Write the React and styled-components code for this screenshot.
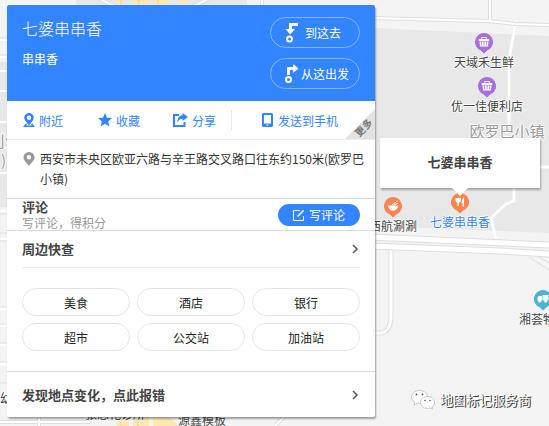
import styled, { createGlobalStyle } from "styled-components";

const GlobalStyle = createGlobalStyle`
  * {
    box-sizing: border-box;
  }

  body {
    margin: 0;
    overflow: hidden;
    font-family: "Noto Sans CJK SC", sans-serif;
    font-size: 12px;
    color: #333;
  }

  button {
    font-family: inherit;
    cursor: pointer;
  }
`;

const Page = styled.main`
  position: relative;
  min-height: 100vh;
  padding: 5px 7px;
  overflow: hidden;
  background-color: #f4f4f4;
`;

const MapLayer = styled.div`
  position: absolute;
  inset: 0;
  overflow: hidden;
`;

const MapDrawing = styled.svg`
  position: absolute;
  top: 0;
  left: 0;
  width: 100%;
  height: 100%;
`;

const Marker = styled.div`
  position: absolute;
  left: ${({ $x }) => $x}px;
  top: ${({ $y }) => $y}px;
  transform: translateX(-50%);
  display: flex;
  flex-direction: column;
  align-items: center;
`;

const MapText = styled.span`
  font-size: ${({ $large }) => ($large ? 15 : 12)}px;
  line-height: 16px;
  white-space: nowrap;
  color: ${({ $color }) => $color || "#444"};
  text-shadow: 1px 0 #fff, -1px 0 #fff, 0 1px #fff, 0 -1px #fff;
`;

const Callout = styled.div`
  position: absolute;
  left: 380px;
  top: 138px;
  width: 160px;
  padding: 14px 0 16px;
  background-color: #fff;
  box-shadow: 1px 2px 2px rgba(0, 0, 0, 0.3);
  color: #444;
  font-size: 13px;
  font-weight: bold;
  line-height: 20px;
  text-align: center;

  &::after {
    content: "";
    position: absolute;
    top: 100%;
    left: 50%;
    margin-left: -8px;
    border: 8px solid transparent;
    border-top-color: #fff;
    border-bottom-width: 0;
  }
`;

const Watermark = styled.div`
  position: absolute;
  left: 411px;
  top: 390px;
  display: flex;
  align-items: center;
  gap: 5px;
  font-size: 13px;
  line-height: 20px;
  white-space: nowrap;
  color: #fff;
  text-shadow: 1px 1px #444, 1px 0 #555;
`;

const Card = styled.section`
  position: relative;
  width: 100%;
  max-width: 368px;
  border-radius: 2px;
  background-color: #fff;
  box-shadow: 1px 2px 2px rgba(0, 0, 0, 0.35);
`;

const Header = styled.header`
  display: flex;
  justify-content: space-between;
  padding: 12px 15px;
  border-radius: 2px 2px 0 0;
  background-color: #3385ff;
  color: #fff;
`;

const Title = styled.h1`
  margin: 0;
  font-size: 16px;
  font-weight: 300;
  line-height: 22px;
`;

const Subtitle = styled.p`
  margin: 10px 0 0;
  line-height: 20px;
`;

const RouteButtons = styled.div`
  display: flex;
  flex-direction: column;
  gap: 10px;
`;

const RouteButton = styled.button`
  display: flex;
  align-items: center;
  gap: ${({ $wide }) => ($wide ? 2 : 6)}px;
  width: 90px;
  height: 31px;
  padding: 0 0 0 14px;
  border: 1px solid #83b4ff;
  border-radius: 16px;
  background-color: transparent;
  color: #fff;
  font-size: 12px;
  white-space: nowrap;
`;

const Toolbar = styled.nav`
  position: relative;
  display: grid;
  grid-template-columns: 75px 75px 59px 1fr;
  align-items: center;
  height: 39px;
  padding-left: 15px;
  border-bottom: 1px solid #eee;
`;

const Tool = styled.button`
  display: flex;
  align-items: center;
  gap: 4px;
  height: 20px;
  padding: 0;
  border: 0;
  border-left: 1px solid ${({ $divided }) => ($divided ? "#e8e8e8" : "transparent")};
  padding-left: ${({ $divided }) => ($divided ? 30 : 0)}px;
  background-color: transparent;
  color: #3385ff;
  font-size: 12px;
  white-space: nowrap;
`;

const MoreButton = styled.button`
  position: absolute;
  right: 0;
  bottom: 0;
  width: 30px;
  height: 30px;
  padding: 0;
  border: 0;
  background-color: #e2e2e2;
  clip-path: polygon(100% 0, 100% 100%, 0 100%);
  color: #777;
  font-size: 10px;
  font-weight: bold;
  line-height: 12px;
`;

const MoreText = styled.span`
  display: block;
  padding-top: 10px;
  transform: rotate(-45deg);
`;

const Address = styled.div`
  display: flex;
  gap: 5px;
  padding: 9px 8px 9px 16px;
  border-bottom: 1px solid #d9d9d9;
  line-height: 20px;

  svg {
    flex: none;
    margin-top: 3px;
  }
`;

const AddressText = styled.p`
  margin: 0;
`;

const Review = styled.div`
  display: flex;
  justify-content: space-between;
  align-items: center;
  height: 32px;
  padding: 0 15px;
  border-bottom: 1px solid #d9d9d9;
`;

const SectionTitle = styled.h2`
  margin: 0;
  color: #444;
  font-size: 13px;
  font-weight: bold;
  line-height: 16px;
`;

const Hint = styled.p`
  margin: 0;
  line-height: 16px;
  color: #999;
`;

const ReviewButton = styled.button`
  display: flex;
  align-items: center;
  justify-content: center;
  gap: 4px;
  width: 82px;
  height: 22px;
  padding: 0;
  border: 0;
  border-radius: 11px;
  background-color: #3385ff;
  color: #fff;
  font-size: 12px;
`;

const Nearby = styled.div`
  padding: 0 15px 20px;
  border-bottom: 1px solid #d9d9d9;
`;

const LinkRow = styled.a`
  display: flex;
  align-items: center;
  justify-content: space-between;
  height: ${({ $tall }) => ($tall ? 45 : 37)}px;
  padding: ${({ $tall }) => ($tall ? "0 15px" : "0")};
  border-bottom: ${({ $tall }) => ($tall ? "0" : "1px solid #eee")};
  color: inherit;
  text-decoration: none;
`;

const Chips = styled.div`
  display: grid;
  grid-template-columns: repeat(3, 1fr);
  gap: 7px;
  padding-top: 20px;
`;

const Chip = styled.button`
  height: 28px;
  padding: 0;
  border: 1px solid #e6e6e6;
  border-radius: 14px;
  background-color: #fff;
  color: #222;
  font-size: 12px;
`;

const categories = ["美食", "酒店", "银行", "超市", "公交站", "加油站"];

const markers = [
  { name: "天域禾生鲜", x: 484, y: 32, kind: "shop" },
  { name: "优一佳便利店", x: 487, y: 76, kind: "shop" },
  { name: "西航涮涮", x: 393, y: 196, kind: "bowl" },
  { name: "七婆串串香", x: 460, y: 192, kind: "fork", color: "#3385ff" },
  { name: "湘荟物流", x: 543, y: 289, kind: "truck" },
];

const mapTexts = [
  { name: "欧罗巴小镇", x: 507, y: 123, large: true, color: "#999" },
  { name: "小区", x: 10, y: 133, large: true, color: "#999" },
  { name: "(东区)", x: -14, y: 152, large: true, color: "#999" },
  { name: "幼", x: 6, y: 390 },
  { name: "张思花诊所", x: 115, y: 406 },
  { name: "源鑫模板", x: 202, y: 412 },
];

const pinColors = {
  shop: "#a66fdc",
  bowl: "#fb8450",
  fork: "#fb8450",
  truck: "#4db3cf",
};

function PinGlyph({ kind }) {
  if (kind === "shop") {
    return (
      <g fill="#fff">
        <path d="M3.800 6h2.400V4.200h5.600V6h2.400v2H3.800zm3.400-.9V6h3.600v-.9z" fillRule="evenodd" />
        <path d="M4.500 8.500h1.800V13H5zM7 8.500h1.600V13H7zM9.400 8.500H11V13H9.400zM11.700 8.500h1.800L13 13h-1.300zM5 12.400h8v1H5z" />
      </g>
    );
  }
  if (kind === "bowl") {
    return (
      <g fill="#fff">
        <path d="M4 8.500h10c0 3-2 4-3 5H7c-1-1-3-2-3-5z" />
        <path d="M8 8l5.500-4M10 8l4-2" stroke="#fff" />
      </g>
    );
  }
  if (kind === "fork") {
    return (
      <g fill="#fff">
        <path d="M4.500 5H10v2.500C10 9 9 9.500 8 9.500V13H6.500V9.500c-1 0-2-.5-2-2z" />
        <path d="M13 4v9.500h-1.500V10H10.800c0-3 .7-5 2.200-6z" />
      </g>
    );
  }
  return (
    <g fill="#fff">
      <path d="M8.500 5h6v5.500h-6zM3.500 8l1-2H8v4.500H3.500z" />
      <circle cx="5.800" cy="11.200" r="1.400" />
      <circle cx="11.700" cy="11.200" r="1.400" />
    </g>
  );
}

function MapPin({ kind }) {
  return (
    <svg width="20" height="22" viewBox="-1 -1 20 22">
      <path
        d="M9 0a9 9 0 0 1 3.500 17.300L9 20.500l-3.500-3.200A9 9 0 0 1 9 0z"
        fill={pinColors[kind]}
      />
      <PinGlyph kind={kind} />
    </svg>
  );
}

function Road({ d, width = 3, edge = 2 }) {
  return (
    <g fill="none">
      <path d={d} stroke="#dedede" strokeWidth={width + edge} />
      <path d={d} stroke="#fff" strokeWidth={width} />
    </g>
  );
}

function MapBackground() {
  return (
    <MapDrawing viewBox="0 0 549 426" preserveAspectRatio="xMinYMin slice" aria-hidden="true">
      <path d="M0 62h40v145H0zM76 0h171v5H76zM374 28l175 8v197l-50-2-125-5z" fill="#e8e8e8" />
      <path d="M0 71h40M0 91h40M0 122h40M0 173h40M0 148h40" stroke="#fff" strokeWidth="2" />
      <path
        d="M0 38h40M0 55h40M0 214h40M0 233h40M0 241h40M0 307h40M0 324h40M0 343h40M0 362h40M0 383h40"
        stroke="#dfdfe4"
      />
      <path d="M0 5h40M0 40h40M0 57h40M0 211h40M0 239h40M0 309h40M0 326h40M0 345h40M0 364h40" stroke="#fff" strokeWidth="2" />
      <path d="M117 0h7v5h-7zM133 0h16v5h-16zM153 0h16v5h-16zM180 0h7v5h-7zM117 417h12v9h-12zM133 417h16v9h-16zM153 417h17l8 9h-25z" fill="#ffe7b3" />
      <path d="M121 0v5M139 0v5M158 0v5M121 422v4M138 417v9" stroke="#fbd38b" />
      <Road d="M98-2l18 9M210-2l-18 9M262-2v8" width={2} />
      <Road d="M0 422h90M39 417v9M275 426l10-10" width={2} />
      <Road d="M516 20l-7 40v65M540 167h9M514 185v16l-8 3-15 14 5 22" edge={0} />
      <Road d="M370 18l118 3 28 3 35 1M490 0v21" width={2} />
      <Road d="M391 248v70q-1 15-12 15h-10" />
      <Road d="M370 237l179 8M370 246l130 5 49 3" width={5} />
      <path d="M529 257l20 13M539 257l10 6" stroke="#dcdcdc" />
    </MapDrawing>
  );
}

function PlaceIcon({ color, based }) {
  return (
    <svg width="12" height="15" viewBox="0 0 12 15" fill={color}>
      <path
        fillRule="evenodd"
        d={
          based
            ? "M6 0a4.800 4.800 0 0 1 4.800 4.800c0 2.700-3 5-4.800 7.700-1.800-2.700-4.800-5-4.800-7.700A4.800 4.800 0 0 1 6 0zm0 2.600a2.200 2.200 0 1 0 0 4.400 2.200 2.200 0 0 0 0-4.400z"
            : "M6 0a5.500 5.500 0 0 1 5.500 5.500C11.500 8.800 8 11 6 14 4 11 .5 8.800.5 5.500A5.500 5.500 0 0 1 6 0zm0 3a2.300 2.300 0 1 0 0 4.600A2.300 2.300 0 0 0 6 3z"
        }
      />
      {based && <path d="M3.500 10.800L1.500 13.300h9L8.500 10.800" fill="none" stroke={color} strokeWidth="1.400" />}
    </svg>
  );
}

function StarIcon() {
  return (
    <svg width="14" height="14" viewBox="0 0 14 14" fill="#3385ff">
      <path d="M7 0l2 4.700 5 .4-3.800 3.300 1.200 5L7 10.700l-4.400 2.700 1.200-5L0 5.100l5-.4z" />
    </svg>
  );
}

function ShareIcon() {
  return (
    <svg width="15" height="14" viewBox="0 0 15 14">
      <path d="M6 2H1v11h10.500V9" fill="none" stroke="#3385ff" strokeWidth="2" />
      <path d="M9.500 0L15 4l-5.500 4V5.700C7 5.600 5.500 7 4.500 9.500 4.300 5.500 6 2.500 9.500 2.300z" fill="#3385ff" />
    </svg>
  );
}

function PhoneIcon() {
  return (
    <svg width="12" height="14" viewBox="0 0 12 14">
      <path fillRule="evenodd" fill="#3385ff" d="M1 0h9l1 1v12l-1 1H1l-1-1V1zm1 2v8.500h7V2zm2.500 9.500v1h2v-1z" />
    </svg>
  );
}

function RouteIcon({ from }) {
  return (
    <svg width="14" height="20" viewBox="0 0 14 20" fill="none" stroke="#fff">
      {from ? (
        <>
          <path d="M3.500 11V4.500H9" strokeWidth="3" />
          <path d="M8 0L13.500 4.500 8 9z" fill="#fff" stroke="none" />
          <circle cx="3.500" cy="15.500" r="2.500" strokeWidth="2" />
        </>
      ) : (
        <>
          <path d="M13 1.500H5.500V8" strokeWidth="3" />
          <path d="M.500 6h9.500L5.200 11.500z" fill="#fff" stroke="none" />
          <circle cx="4.500" cy="16" r="2.500" strokeWidth="2" />
        </>
      )}
    </svg>
  );
}

function EditIcon() {
  return (
    <svg width="12" height="12" viewBox="0 0 12 12" fill="none" stroke="#fff">
      <path d="M7 1.500H.500v10h10V7" />
      <path d="M4.500 7.500l6-6" strokeWidth="1.600" />
    </svg>
  );
}

function ChevronIcon() {
  return (
    <svg width="8" height="10" viewBox="0 0 8 10" fill="none" stroke="#555" strokeWidth="1.500">
      <path d="M1 1l4 4-4 4" />
    </svg>
  );
}

function ChatIcon() {
  return (
    <svg width="24" height="20" viewBox="0 0 24 20" fill="#fff" stroke="#999" strokeWidth="0.500">
      <path d="M8.500.500c5 0 8 3.300 8 6.500s-3 6.500-8 6.500l-2-.3L3 15l.7-3C1.500 10.700.5 9 .5 7c0-3.200 3-6.500 8-6.500z" />
      <path d="M16.500 6.500c4 0 7 2.800 7 6 0 2-1 3.500-2.500 4.500l.5 2.200-2.800-1.200-2.200.4c-4 0-7-2.600-7-5.900s3-6 7-6z" />
      <g fill="#555" stroke="none">
        <circle cx="5.500" cy="4.500" r="0.900" />
        <circle cx="11.500" cy="4.500" r="0.900" />
        <circle cx="14" cy="10.500" r="0.800" />
        <circle cx="19" cy="10.500" r="0.800" />
      </g>
    </svg>
  );
}

function MapView() {
  return (
    <MapLayer>
      <MapBackground />
      {mapTexts.map((item) => (
        <Marker key={item.name} $x={item.x} $y={item.y}>
          <MapText $large={item.large} $color={item.color}>
            {item.name}
          </MapText>
        </Marker>
      ))}
      {markers.map((item) => (
        <Marker key={item.name} $x={item.x} $y={item.y}>
          <MapPin kind={item.kind} />
          <MapText $color={item.color}>{item.name}</MapText>
        </Marker>
      ))}
      <Callout>七婆串串香</Callout>
      <Watermark>
        <ChatIcon />
        地图标记服务商
      </Watermark>
    </MapLayer>
  );
}

export default function App() {
  return (
    <Page>
      <GlobalStyle />
      <MapView />
      <Card>
        <Header>
          <div>
            <Title>七婆串串香</Title>
            <Subtitle>串串香</Subtitle>
          </div>
          <RouteButtons>
            <RouteButton type="button">
              <RouteIcon />
              到这去
            </RouteButton>
            <RouteButton type="button" $wide>
              <RouteIcon from />
              从这出发
            </RouteButton>
          </RouteButtons>
        </Header>
        <Toolbar>
          <Tool type="button">
            <PlaceIcon color="#3385ff" based />
            附近
          </Tool>
          <Tool type="button">
            <StarIcon />
            收藏
          </Tool>
          <Tool type="button">
            <ShareIcon />
            分享
          </Tool>
          <Tool type="button" $divided>
            <PhoneIcon />
            发送到手机
          </Tool>
          <MoreButton type="button">
            <MoreText>更多</MoreText>
          </MoreButton>
        </Toolbar>
        <Address>
          <PlaceIcon color="#999" />
          <AddressText>西安市未央区欧亚六路与辛王路交叉路口往东约150米(欧罗巴小镇)</AddressText>
        </Address>
        <Review>
          <div>
            <SectionTitle>评论</SectionTitle>
            <Hint>写评论，得积分</Hint>
          </div>
          <ReviewButton type="button">
            <EditIcon />
            写评论
          </ReviewButton>
        </Review>
        <Nearby>
          <LinkRow href="#nearby">
            <SectionTitle>周边快查</SectionTitle>
            <ChevronIcon />
          </LinkRow>
          <Chips>
            {categories.map((name) => (
              <Chip key={name} type="button">
                {name}
              </Chip>
            ))}
          </Chips>
        </Nearby>
        <LinkRow href="#report" $tall>
          <SectionTitle>发现地点变化，点此报错</SectionTitle>
          <ChevronIcon />
        </LinkRow>
      </Card>
    </Page>
  );
}
